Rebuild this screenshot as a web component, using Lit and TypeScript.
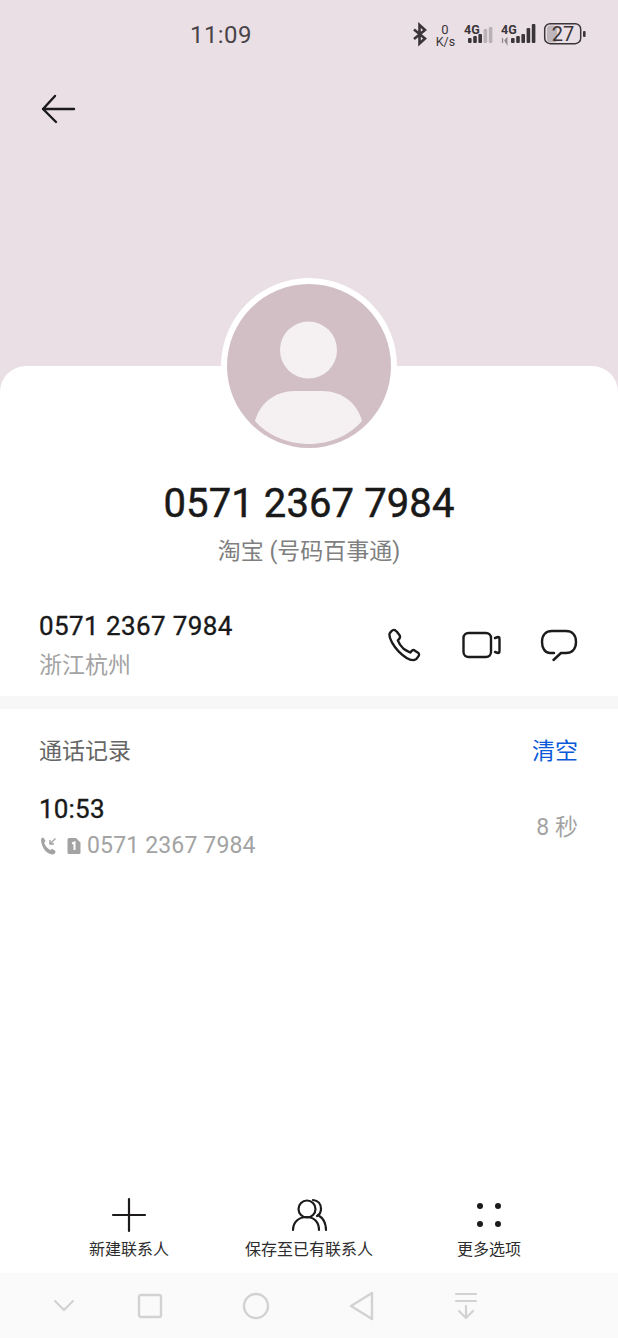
import { LitElement, html, css, svg } from "lit";
import { customElement } from "lit/decorators.js";

@customElement("app-root")
export class AppRoot extends LitElement {
  static styles = css`
    :host {
      display: flex;
      flex-direction: column;
      width: 618px;
      height: 1338px;
      overflow: hidden;
      background: #e9dfe5;
      font-family: Roboto, "Noto Sans CJK SC", sans-serif;
      color: #191919;
    }
    svg { display: block; flex: none; }
    .hero { height: 366px; flex: none; display: flex; flex-direction: column; }
    .status {
      height: 70px; display: flex; align-items: center;
      padding: 0 32px 0 190px; color: #333; flex: none;
    }
    .clock { font-size: 24px; letter-spacing: 0.4px; color: #4a4448; flex: 1; }
    .status-icons { display: flex; align-items: center; }
    .back { margin: 23px 0 0 41px; }
    .card {
      flex: 1; min-height: 0; background: #fff; border-radius: 26px 26px 0 0;
      display: flex; flex-direction: column;
    }
    .avatar-wrap { height: 82px; display: flex; justify-content: center; flex: none; }
    .avatar {
      width: 176px; height: 176px; margin-top: -88px; border-radius: 50%; background: #fff;
      display: flex; align-items: center; justify-content: center; flex: none;
    }
    .name { margin-top: 33px; text-align: center; font-size: 40px; line-height: 46px; letter-spacing: 0.1px; -webkit-text-stroke: 0.5px #191919; }
    .sub { margin-top: 10px; text-align: center; font-size: 23px; line-height: 30px; color: #7f7f7f; }
    .number-row {
      margin-top: 42px; padding: 0 40px 0 39px; height: 74px; display: flex; align-items: flex-start;
      justify-content: space-between;
    }
    .num { font-size: 26px; line-height: 34px; letter-spacing: 0.4px; -webkit-text-stroke: 0.35px #191919; }
    .loc { font-size: 23px; line-height: 30px; color: #a3a3a3; margin-top: 8px; }
    .actions { display: flex; align-items: center; gap: 39px; margin: 13px 0 0; height: 46px; }
    .divider { height: 13px; background: #f7f7f7; margin-top: 13px; flex: none; }
    .log-head {
      padding: 0 40px 0 39px; margin-top: 27px; display: flex; justify-content: space-between; align-items: center;
      font-size: 23px; line-height: 32px; color: #666;
    }
    .clear { color: #0a59d9; }
    .log-row { padding: 0 40px 0 39px; margin-top: 24px; display: flex; justify-content: space-between; align-items: center; }
    .time { font-size: 26px; line-height: 34px; letter-spacing: 0.2px; -webkit-text-stroke: 0.35px #191919; }
    .detail { display: flex; align-items: center; margin-top: 4px; font-size: 23px; line-height: 32px; color: #a3a3a3; letter-spacing: 0.15px; }
    .detail .call { margin-right: 9px; margin-left: 1px; }
    .detail .sim { margin-right: 6px; }
    .dur { font-size: 23px; color: #a3a3a3; margin-bottom: 5px; }
    .spacer { flex: 1; }
    .tools { display: grid; grid-template-columns: 100px 1fr 100px; padding: 12px 79px 0; height: 88px; flex: none; box-sizing: border-box; }
    .tool { display: flex; flex-direction: column; align-items: center; font-size: 16px; color: #2c2c2c; white-space: nowrap; }
    .tool span { margin-top: 5px; line-height: 24px; }
    .nav {
      height: 65px; flex: none; background: #fafafa; display: flex; align-items: center;
      padding: 0 0 0 52px; gap: 79px;
    }
    .nav .first { margin-right: -18px; }
  `;

  private bars(heights: number[], dim: number) {
    return heights.map((h, i) => svg`<rect x=${i * 5.2} y=${23 - h} width="3.6" height=${h} rx="1" fill=${i >= dim ? "#b9b1b6" : "#3a3538"}/>`);
  }

  render() {
    return html`
      <div class="hero">
        <div class="status">
          <div class="clock">11:09</div>
          <div class="status-icons">
            <svg width="176" height="30" viewBox="0 0 176 30" fill="none">
              <path d="M4 9.500l11 9-5.500 5V5l5.500 5L4 19" stroke="#3a3538" stroke-width="2.600"/>
              <text x="35" y="14" font-size="13" fill="#3a3538" text-anchor="middle" font-family="Roboto">0</text>
              <text x="35.500" y="25.500" font-size="12.500" fill="#3a3538" text-anchor="middle" font-family="Roboto">K/s</text>
              <text x="54" y="13.500" font-size="12.500" font-weight="700" fill="#3a3538" font-family="Roboto">4G</text>
              <g transform="translate(58 0)">${this.bars([5, 7, 9, 14, 16], 3)}</g>
              <text x="91" y="13.500" font-size="12.500" font-weight="700" fill="#3a3538" font-family="Roboto">4G</text>
              <path d="M92.500 18v5M95 20.500l1.800-2v5z" stroke="#8f888c" stroke-width="1.300"/>
              <g transform="translate(101 0)">${this.bars([5, 7, 9, 15, 19], 5)}</g>
              <rect x="137" y="5.500" width="10" height="17" rx="3" fill="#bdb5ba"/>
              <rect x="134.700" y="3.700" width="36" height="20" rx="5.500" stroke="#3a3538" stroke-width="1.500"/>
              <text x="153" y="20.700" font-size="20" fill="#3a3538" text-anchor="middle" font-family="Roboto">27</text>
              <rect x="173" y="11" width="2.600" height="6" rx="1" fill="#3a3538"/>
            </svg>
          </div>
        </div>
        <svg class="back" width="36" height="32" viewBox="0 0 36 32" fill="none" stroke="#1c1a1b" stroke-width="2.400" stroke-linecap="round" stroke-linejoin="round">
          <path d="M33 16H2M14 3L2 16l13 13"/>
        </svg>
      </div>
      <div class="card">
        <div class="avatar-wrap">
          <div class="avatar">
            <svg width="164" height="164" viewBox="0 0 164 164">
              <circle cx="82" cy="82" r="82" fill="#d2bfc6"/>
              <circle cx="81.500" cy="66" r="28.500" fill="#f5f1f3"/>
              <path d="M28 137C33 119 48 107 68 107h27c20 0 35 12 40 30-12 14-32 23-53 23s-42-9-54-23z" fill="#f5f1f3"/>
            </svg>
          </div>
        </div>
        <div class="name">0571 2367 7984</div>
        <div class="sub">淘宝 (号码百事通)</div>
        <div class="number-row">
          <div>
            <div class="num">0571 2367 7984</div>
            <div class="loc">浙江杭州</div>
          </div>
          <div class="actions">
            <svg width="34" height="34" viewBox="0 0 36 36" fill="none" stroke="#1c1a1b" stroke-width="2.500" stroke-linejoin="round">
              <path d="M2.500 7c0-2 3-5 5-5 1 0 2 1 3 2l3 4c1 2 0 3-1 4l-1 1c1 3 3 6 6 9 3 2 5 3 7 4l2-2c1-1 2-1 3 0l3 2c2 1 2 3 0 5-1 2-3 3-5 3-3 0-9-3-15-9S2.500 11 2.500 7z"/>
            </svg>
            <svg width="41" height="30" viewBox="0 0 41 30" fill="none" stroke="#1c1a1b" stroke-width="2.400" stroke-linejoin="round" stroke-linecap="round">
              <rect x="3.500" y="3" width="27.500" height="24" rx="5"/>
              <path d="M35 8l3-1c1 0 1.500 1 1.500 2v12c0 1-.5 2-1.500 2l-3-1"/>
            </svg>
            <svg width="38" height="34" viewBox="0 0 38 34" fill="none" stroke="#1c1a1b" stroke-width="2.400" stroke-linecap="round" stroke-linejoin="round">
              <path d="M14 25h-4C5 25 2 20 2 14 2 7 6 3 12 3h14c6 0 10 4 10 11s-4 11-10 11h-5l-7.500 7"/>
            </svg>
          </div>
        </div>
        <div class="divider"></div>
        <div class="log-head"><span>通话记录</span><span class="clear">清空</span></div>
        <div class="log-row">
          <div>
            <div class="time">10:53</div>
            <div class="detail">
              <svg class="call" width="18" height="18" viewBox="0 0 18 18" fill="#a3a3a3">
                <path d="M1 2.500c0-1 1-2 2.500-2l2 3.500-1.300 2c1 3 3 5 6 7l2-1.200 3.300 2.200c0 2-1 3.500-3 3.500C6 17.500 1 9 1 2.500z"/>
                <path d="M15.500 1.500L10 7M10 3v4h4" fill="none" stroke="#a3a3a3" stroke-width="1.400"/>
              </svg>
              <svg class="sim" width="14" height="18" viewBox="0 0 14 18">
                <path d="M2 1h7l4.500 4.500V16a1 1 0 0 1-1 1H2a1.500 1.500 0 0 1-1.500-1.500V2.500A1.500 1.500 0 0 1 2 1z" fill="#a3a3a3"/>
                <path d="M5 6.500L7.500 5.500V13" fill="none" stroke="#fff" stroke-width="2"/>
              </svg>
              <span>0571 2367 7984</span>
            </div>
          </div>
          <div class="dur">8 秒</div>
        </div>
        <div class="spacer"></div>
        <div class="tools">
          <div class="tool">
            <svg width="36" height="36" viewBox="0 0 36 36" stroke="#1c1a1b" stroke-width="2.200" stroke-linecap="round"><path d="M2 18h32M18 2v32"/></svg>
            <span>新建联系人</span>
          </div>
          <div class="tool">
            <svg width="36" height="36" viewBox="0 0 36 36" fill="none" stroke="#1c1a1b" stroke-width="2.200" stroke-linecap="round">
              <circle cx="16" cy="12" r="8.500"/>
              <path d="M2 33c0-8 6-13 13.500-13S28 25 28 33M22 3c5 .5 8 4 8 9 0 3-1.500 5.500-4 7M27 18c5 3 8 8 8 15"/>
            </svg>
            <span>保存至已有联系人</span>
          </div>
          <div class="tool">
            <svg width="36" height="36" viewBox="0 0 36 36" fill="#1c1a1b">
              <circle cx="9" cy="9" r="3"/><circle cx="27" cy="9" r="3"/><circle cx="9" cy="27" r="3"/><circle cx="27" cy="27" r="3"/>
            </svg>
            <span>更多选项</span>
          </div>
        </div>
        <div class="nav">
          <svg class="first" width="24" height="16" viewBox="0 0 24 16" fill="none" stroke="#d2d2d2" stroke-width="2.200" stroke-linecap="round" stroke-linejoin="round"><path d="M3 3l9 9 9-9"/></svg>
          <svg width="26" height="26" viewBox="0 0 26 26" fill="none" stroke="#d2d2d2" stroke-width="2.400" stroke-linejoin="round"><rect x="2" y="2" width="22" height="22" rx="2"/></svg>
          <svg width="28" height="28" viewBox="0 0 28 28" fill="none" stroke="#d2d2d2" stroke-width="2.400"><circle cx="14" cy="14" r="12"/></svg>
          <svg width="26" height="30" viewBox="0 0 26 30" fill="none" stroke="#d2d2d2" stroke-width="2.400" stroke-linejoin="round"><path d="M23 2L2 15l21 13z"/></svg>
          <svg width="24" height="28" viewBox="0 0 24 28" fill="none" stroke="#d2d2d2" stroke-width="2.200" stroke-linecap="round" stroke-linejoin="round"><path d="M2 2h20M2 9h20M12 14v12M5 19l7 7 7-7"/></svg>
        </div>
      </div>
    `;
  }
}
